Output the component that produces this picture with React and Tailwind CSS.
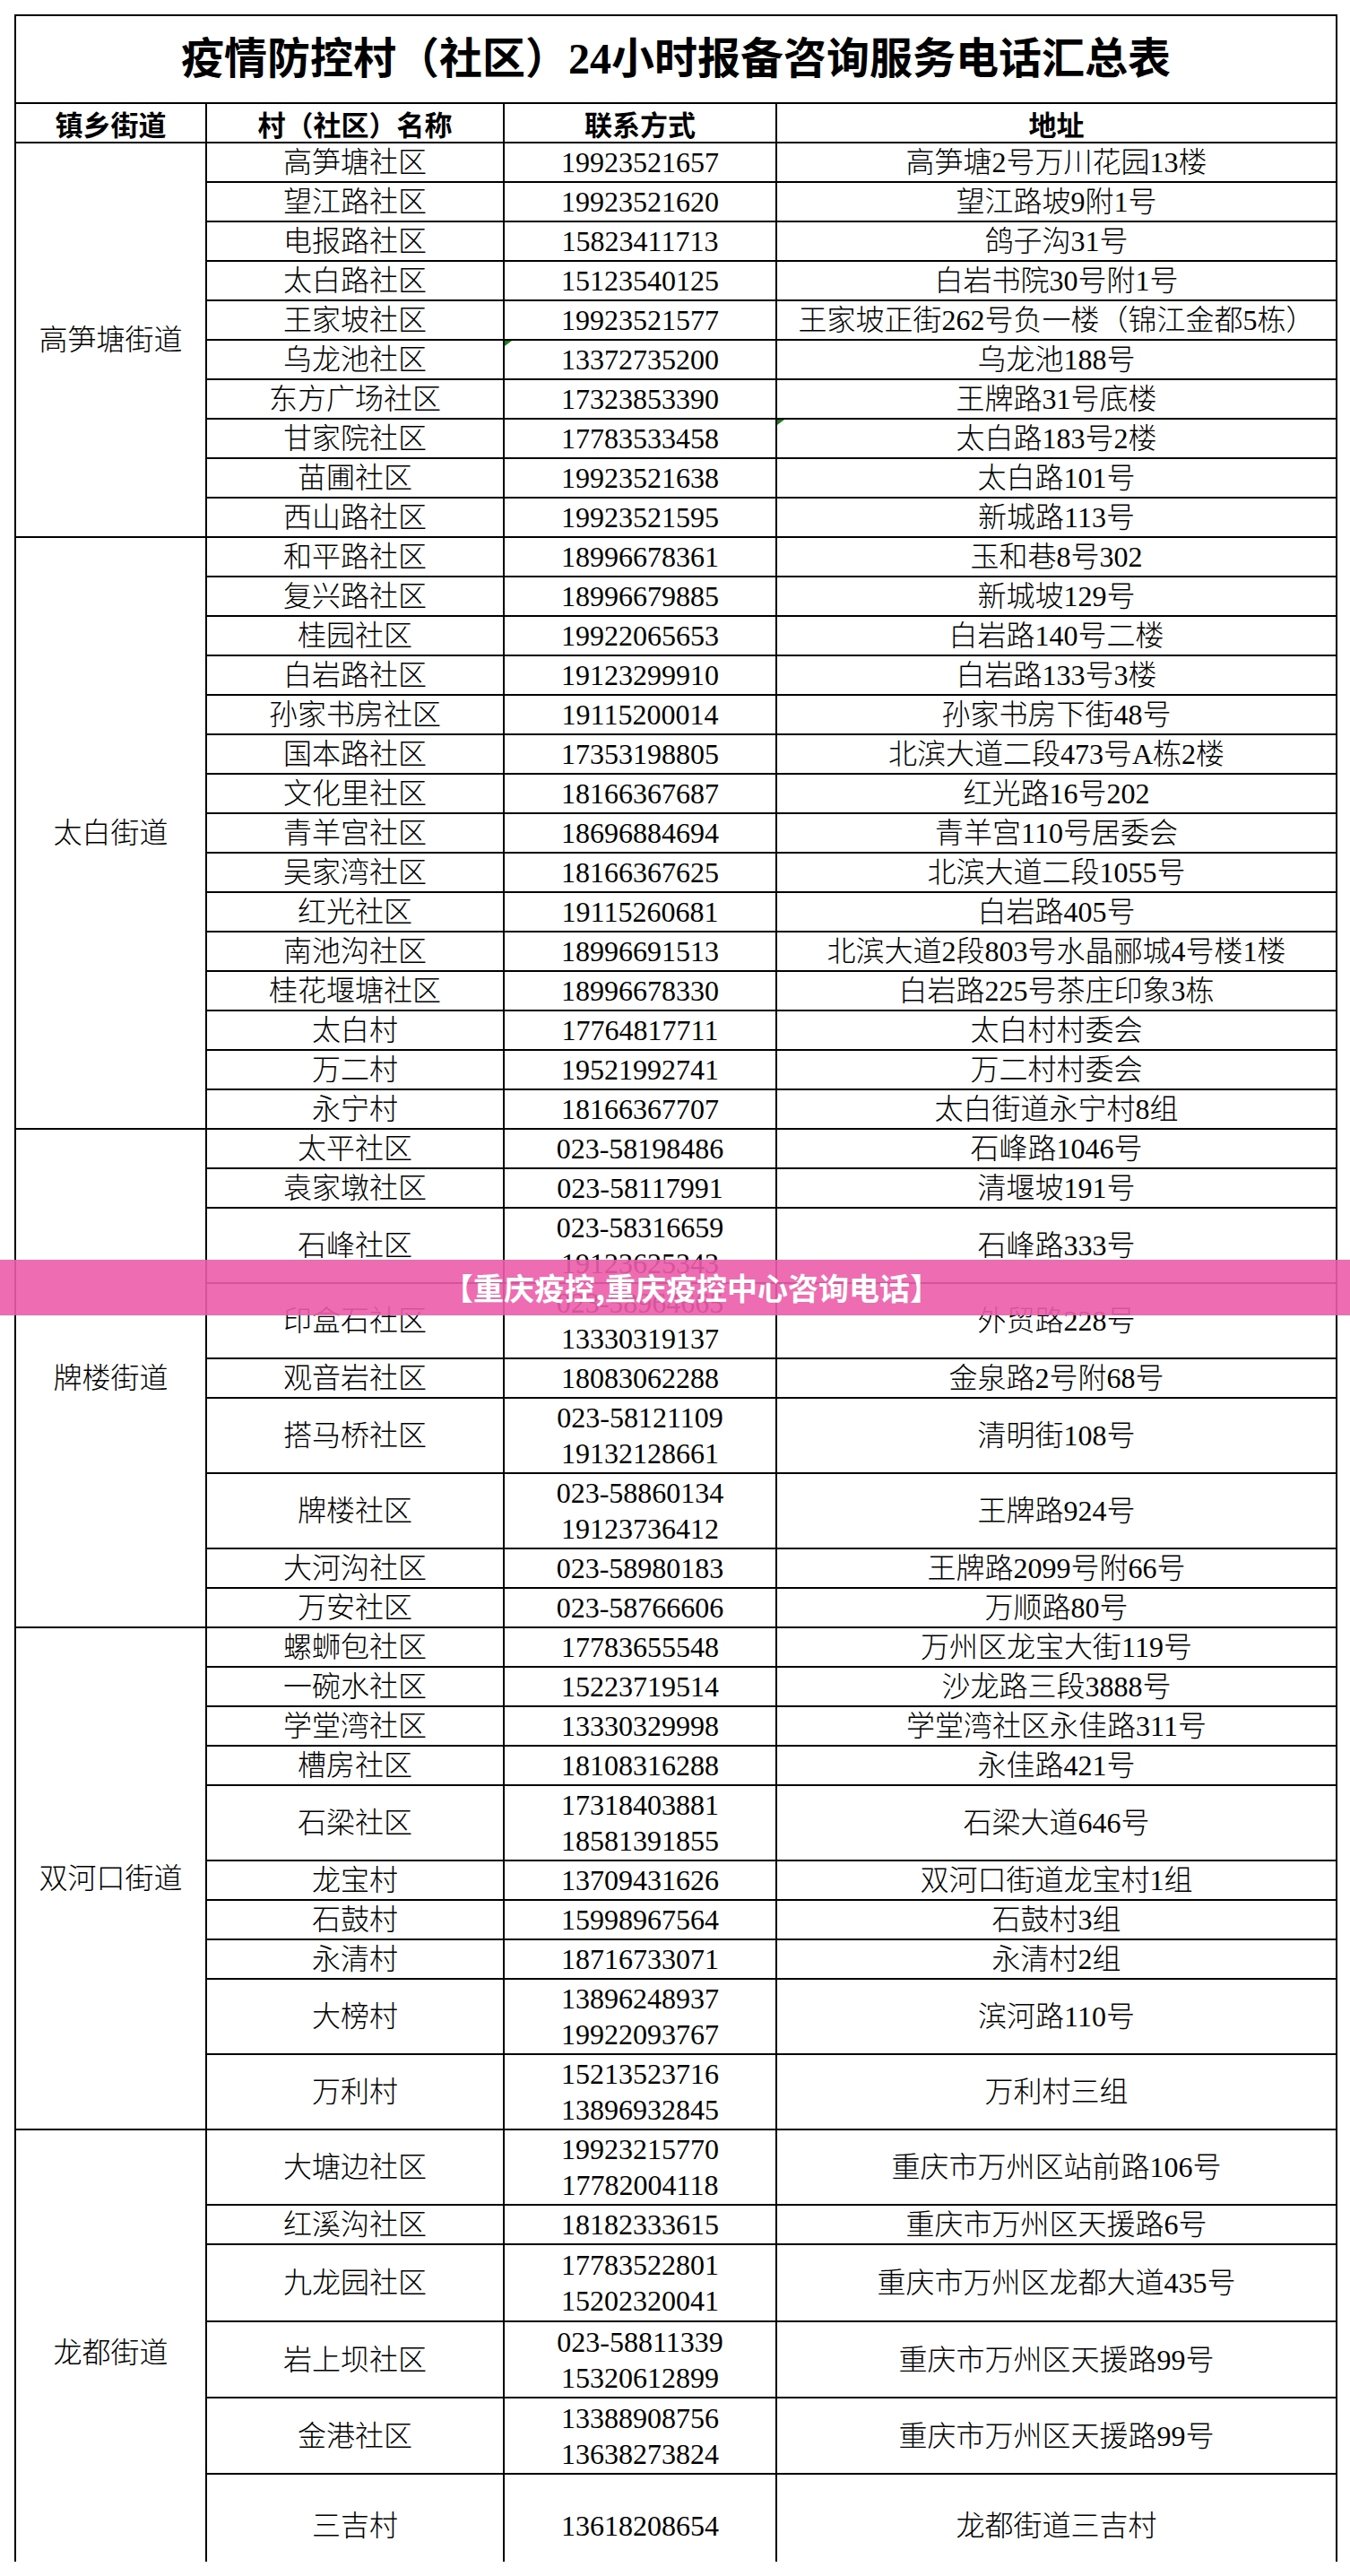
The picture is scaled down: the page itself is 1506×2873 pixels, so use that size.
import React from 'react';

const sections = [
  {
    name: '高笋塘街道',
    rows: [
      { n: '高笋塘社区', p: ['19923521657'], a: '高笋塘2号万川花园13楼' },
      { n: '望江路社区', p: ['19923521620'], a: '望江路坡9附1号' },
      { n: '电报路社区', p: ['15823411713'], a: '鸽子沟31号' },
      { n: '太白路社区', p: ['15123540125'], a: '白岩书院30号附1号' },
      { n: '王家坡社区', p: ['19923521577'], a: '王家坡正街262号负一楼（锦江金都5栋）' },
      { n: '乌龙池社区', p: ['13372735200'], a: '乌龙池188号', pm: true },
      { n: '东方广场社区', p: ['17323853390'], a: '王牌路31号底楼' },
      { n: '甘家院社区', p: ['17783533458'], a: '太白路183号2楼', am: true },
      { n: '苗圃社区', p: ['19923521638'], a: '太白路101号' },
      { n: '西山路社区', p: ['19923521595'], a: '新城路113号' },
    ],
  },
  {
    name: '太白街道',
    rows: [
      { n: '和平路社区', p: ['18996678361'], a: '玉和巷8号302' },
      { n: '复兴路社区', p: ['18996679885'], a: '新城坡129号' },
      { n: '桂园社区', p: ['19922065653'], a: '白岩路140号二楼' },
      { n: '白岩路社区', p: ['19123299910'], a: '白岩路133号3楼' },
      { n: '孙家书房社区', p: ['19115200014'], a: '孙家书房下街48号' },
      { n: '国本路社区', p: ['17353198805'], a: '北滨大道二段473号A栋2楼' },
      { n: '文化里社区', p: ['18166367687'], a: '红光路16号202' },
      { n: '青羊宫社区', p: ['18696884694'], a: '青羊宫110号居委会' },
      { n: '吴家湾社区', p: ['18166367625'], a: '北滨大道二段1055号' },
      { n: '红光社区', p: ['19115260681'], a: '白岩路405号' },
      { n: '南池沟社区', p: ['18996691513'], a: '北滨大道2段803号水晶郦城4号楼1楼' },
      { n: '桂花堰塘社区', p: ['18996678330'], a: '白岩路225号茶庄印象3栋' },
      { n: '太白村', p: ['17764817711'], a: '太白村村委会' },
      { n: '万二村', p: ['19521992741'], a: '万二村村委会' },
      { n: '永宁村', p: ['18166367707'], a: '太白街道永宁村8组' },
    ],
  },
  {
    name: '牌楼街道',
    rows: [
      { n: '太平社区', p: ['023-58198486'], a: '石峰路1046号' },
      { n: '袁家墩社区', p: ['023-58117991'], a: '清堰坡191号' },
      { n: '石峰社区', p: ['023-58316659', '19123625343'], a: '石峰路333号' },
      { n: '印盒石社区', p: ['023-58964665', '13330319137'], a: '外贸路228号' },
      { n: '观音岩社区', p: ['18083062288'], a: '金泉路2号附68号' },
      { n: '搭马桥社区', p: ['023-58121109', '19132128661'], a: '清明街108号' },
      { n: '牌楼社区', p: ['023-58860134', '19123736412'], a: '王牌路924号' },
      { n: '大河沟社区', p: ['023-58980183'], a: '王牌路2099号附66号' },
      { n: '万安社区', p: ['023-58766606'], a: '万顺路80号' },
    ],
  },
  {
    name: '双河口街道',
    rows: [
      { n: '螺蛳包社区', p: ['17783655548'], a: '万州区龙宝大街119号' },
      { n: '一碗水社区', p: ['15223719514'], a: '沙龙路三段3888号' },
      { n: '学堂湾社区', p: ['13330329998'], a: '学堂湾社区永佳路311号' },
      { n: '槽房社区', p: ['18108316288'], a: '永佳路421号' },
      { n: '石梁社区', p: ['17318403881', '18581391855'], a: '石梁大道646号' },
      { n: '龙宝村', p: ['13709431626'], a: '双河口街道龙宝村1组' },
      { n: '石鼓村', p: ['15998967564'], a: '石鼓村3组' },
      { n: '永清村', p: ['18716733071'], a: '永清村2组' },
      { n: '大榜村', p: ['13896248937', '19922093767'], a: '滨河路110号' },
      { n: '万利村', p: ['15213523716', '13896932845'], a: '万利村三组' },
    ],
  },
  {
    name: '龙都街道',
    rows: [
      { n: '大塘边社区', p: ['19923215770', '17782004118'], a: '重庆市万州区站前路106号' },
      { n: '红溪沟社区', p: ['18182333615'], a: '重庆市万州区天援路6号' },
      { n: '九龙园社区', p: ['17783522801', '15202320041'], a: '重庆市万州区龙都大道435号', h: 86 },
      { n: '岩上坝社区', p: ['023-58811339', '15320612899'], a: '重庆市万州区天援路99号', h: 85 },
      { n: '金港社区', p: ['13388908756', '13638273824'], a: '重庆市万州区天援路99号', h: 85 },
      { n: '三吉村', p: ['13618208654'], a: '龙都街道三吉村', h: 114, last: true },
    ],
  },
];

function Mark() {
  return (
    <span className="absolute left-0 top-0 w-0 h-0 border-t-[6px] border-t-[#1a7f1a] border-r-[8px] border-r-transparent" />
  );
}

const cell = 'border-2 border-black text-center align-middle p-0';

export default function App() {
  return (
    <div className="bg-white w-[1506px] min-h-[2873px] text-black font-['Liberation_Serif','Noto_Sans_CJK_SC',serif]">
      <div className="pt-[16px] pl-[16px] h-[2857px] overflow-hidden relative">
        <table className="border-collapse table-fixed w-[1474px]">
          <colgroup>
            <col className="w-[213px]" />
            <col className="w-[332px]" />
            <col className="w-[304px]" />
            <col className="w-[625px]" />
          </colgroup>
          <tbody>
            <tr>
              <td colSpan={4} className={`${cell} h-[98px] text-[48px] font-bold leading-none`}>
                疫情防控村（社区）24小时报备咨询服务电话汇总表
              </td>
            </tr>
            <tr className="text-[31px] font-bold font-['Noto_Sans_CJK_SC',sans-serif] leading-none">
              <td className={`${cell} h-[44px]`}>镇乡街道</td>
              <td className={`${cell} h-[44px]`}>村（社区）名称</td>
              <td className={`${cell} h-[44px]`}>联系方式</td>
              <td className={`${cell} h-[44px]`}>地址</td>
            </tr>
            {sections.map((s) =>
              s.rows.map((r, i) => {
                const h = r.h || (r.p.length > 1 ? 84 : 44);
                return (
                  <tr key={s.name + r.n} className="text-[32px] font-light leading-[40px]">
                    {i === 0 && (
                      <td rowSpan={s.rows.length} className={cell}>
                        {s.name}
                      </td>
                    )}
                    <td className={`${cell} ${r.last ? 'border-b-0' : ''}`} style={{ height: h }}>
                      {r.n}
                    </td>
                    <td className={`${cell} relative ${r.last ? 'border-b-0' : ''}`}>
                      {r.pm && <Mark />}
                      {r.p.map((ph) => (
                        <div key={ph} className="leading-[40px]">{ph}</div>
                      ))}
                    </td>
                    <td className={`${cell} relative ${r.last ? 'border-b-0' : ''}`}>
                      {r.am && <Mark />}
                      {r.a}
                    </td>
                  </tr>
                );
              })
            )}
          </tbody>
        </table>
      </div>
      <div className="absolute left-0 top-[1405px] w-[1506px] h-[62px] bg-[rgba(236,92,170,0.9)] flex items-center pl-[494px]">
        <span className="text-white text-[34px] font-bold leading-none font-['Noto_Sans_CJK_SC',sans-serif]">
          【重庆疫控,重庆疫控中心咨询电话】
        </span>
      </div>
    </div>
  );
}
